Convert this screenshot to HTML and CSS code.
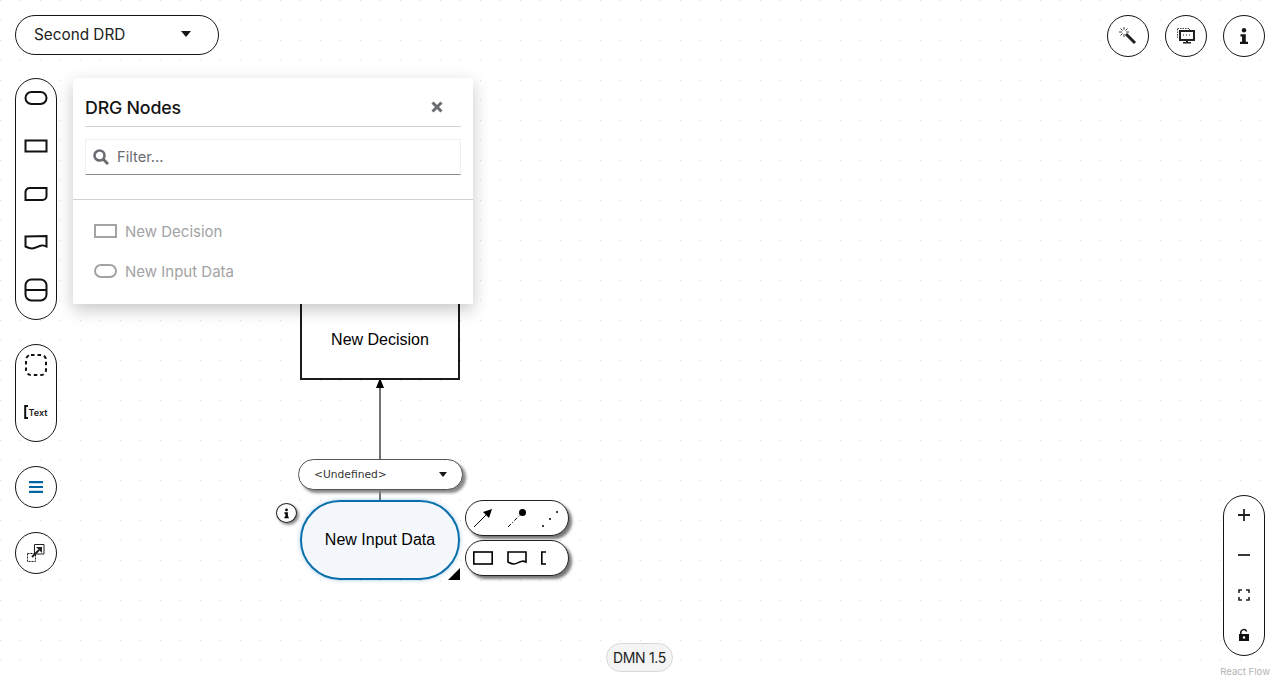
FILE: index.html
```html
<!DOCTYPE html>
<html lang="en">
<head>
    <meta charset="UTF-8">
    <title>DMN Editor</title>
    <link rel="stylesheet" href="styles.css">
</head>
<body>
<div class="canvas">
    <!-- edge between the two nodes -->
    <svg class="edge" width="1280" height="680">
        <path d="M380 500V386" stroke="#444" stroke-width="1.5" fill="none"/>
        <path d="M380 378l4 10h-8z" fill="#000"/>
    </svg>

    <div class="node decision-node">New Decision</div>

    <div class="type-select">
        <span>&lt;Undefined&gt;</span>
        <i class="caret caret-small"></i>
    </div>

    <div class="node input-node">New Input Data</div>
    <div class="resize-handle"></div>

    <div class="node-info">
        <svg width="12" height="14" viewBox="0 0 12 14"><circle cx="6" cy="2.2" r="1.8"/><path d="M3.2 5.4h4.600v5.800h1.200v2H3.200v-2h1.300V7.400H3.200z"/></svg>
    </div>

    <div class="node-tools">
        <div class="tool-row">
            <svg width="20" height="20" viewBox="0 0 20 20"><path d="M1 19L15 5" stroke="#000" fill="none"/><path d="M19 1l-3 9-6-6z"/></svg>
            <svg width="20" height="20" viewBox="0 0 20 20"><path d="M1 19l12-12" stroke="#000" stroke-dasharray="4 2 1 2" fill="none"/><circle cx="15.5" cy="4.5" r="3.5"/></svg>
            <svg width="20" height="20" viewBox="0 0 20 20"><circle cx="2" cy="18" r="1"/><circle cx="9" cy="11" r="1"/><circle cx="16" cy="4" r="1"/></svg>
        </div>
        <div class="tool-row">
            <svg width="20" height="14" viewBox="0 0 20 14"><rect x="0.800" y="1" width="18.400" height="12" stroke="#000" stroke-width="1.600" fill="none"/></svg>
            <svg width="20" height="14" viewBox="0 0 20 14"><path d="M1 1h18v10c-1.500-.6-3-1-4-.8C12 10.500 10 13 7 13 4.500 13 3 12 1 11z" stroke="#000" stroke-width="1.600" fill="none"/></svg>
            <svg width="10" height="14" viewBox="0 0 10 14"><path d="M5 1H0.800v12H5" stroke="#000" stroke-width="1.600" fill="none"/></svg>
        </div>
    </div>

    <div class="left-bar">
        <div class="drd-select">
            <span>Second DRD</span>
            <i class="caret"></i>
        </div>
        <div class="left-body">
            <div class="palette">
                <div class="pill pill-nodes">
                    <svg width="24" height="16" viewBox="0 0 24 16"><rect x="1.500" y="2" width="21" height="12" rx="6" class="shape"/></svg>
                    <svg width="24" height="16" viewBox="0 0 24 16"><rect x="1.500" y="2.500" width="21" height="11" class="shape"/></svg>
                    <svg width="24" height="16" viewBox="0 0 24 16"><path d="M5.500 2h17v8a4 4 0 0 1-4 4H1.500V6a4 4 0 0 1 4-4z" class="shape"/></svg>
                    <svg width="24" height="16" viewBox="0 0 24 16"><path d="M1.500 2.500l21-.5v10.500c-2-.8-3.500-1.500-5-1C14 12 12 14.500 8 14.500c-2.500 0-4.500-1-6.500-2z" class="shape"/></svg>
                    <svg width="24" height="24" viewBox="0 0 24 24"><rect x="1.500" y="1.500" width="21" height="21" rx="6" class="shape"/><path d="M1.500 12h21" class="shape"/></svg>
                </div>
                <div class="pill pill-extras">
                    <svg width="24" height="24" viewBox="0 0 24 24"><rect x="2" y="2" width="20" height="20" rx="5" class="shape" stroke-dasharray="3.500 3"/></svg>
                    <div class="text-tool"><svg width="5" height="14" viewBox="0 0 5 14"><path d="M4 1H1.200v12H4" class="shape"/></svg><span>Text</span></div>
                </div>
                <div class="pill pill-round pill-blue">
                    <svg width="14" height="12" viewBox="0 0 14 12"><path d="M0 0h14v2.200H0zM0 4.900h14v2.200H0zM0 9.800h14V12H0z"/></svg>
                </div>
                <div class="pill pill-round">
                    <svg width="18" height="18" viewBox="0 0 18 18"><rect x="0.500" y="9.500" width="8" height="8" stroke="#222" stroke-dasharray="2 1" fill="none"/><path d="M7.500 0.500h9.500v9.500H7.500z" stroke="#222" fill="#fff"/><path d="M5 13l7-7" stroke="#222" stroke-width="2"/><path d="M15 3v6l-6-6z" fill="#222"/></svg>
                </div>
            </div>

            <div class="drg-panel">
                <div class="panel-head">
                    <h2>DRG Nodes</h2>
                    <svg class="panel-close" width="12" height="12" viewBox="0 0 12 12"><path d="M1.500 1.500l9 9M10.500 1.500l-9 9" stroke="#6a6e73" stroke-width="3" fill="none"/></svg>
                </div>
                <div class="panel-filter">
                    <svg width="16" height="16" viewBox="0 0 16 16"><circle cx="6.500" cy="6.500" r="5" stroke="#6a6e73" stroke-width="2.600" fill="none"/><path d="M10.300 10.300l4.700 4.700" stroke="#6a6e73" stroke-width="3" fill="none"/></svg>
                    <span>Filter...</span>
                </div>
                <div class="panel-list">
                    <div class="panel-item">
                        <svg width="23" height="14" viewBox="0 0 23 14"><rect x="1" y="1" width="21" height="12" stroke="#a3a3a3" stroke-width="2" fill="none"/></svg>
                        <span>New Decision</span>
                    </div>
                    <div class="panel-item">
                        <svg width="23" height="14" viewBox="0 0 23 14"><rect x="1" y="1" width="21" height="12" rx="6" stroke="#a3a3a3" stroke-width="2" fill="none"/></svg>
                        <span>New Input Data</span>
                    </div>
                </div>
            </div>
        </div>
    </div>

    <div class="top-actions">
        <div class="pill pill-round">
            <svg width="18" height="18" viewBox="0 0 18 18"><path d="M7 7l9 9" stroke="#222" stroke-width="3"/><path d="M5 0v3M5 7v3M0 5h3M7 5h3M1.500 1.500l2 2M8.500 1.500l-2 2M1.500 8.500l2-2" stroke="#444" stroke-width="1" fill="none"/></svg>
        </div>
        <div class="pill pill-round">
            <svg width="18" height="16" viewBox="0 0 18 16"><rect x="0.500" y="0.500" width="12" height="9" stroke="#444" stroke-dasharray="1.500 1" fill="none"/><rect x="3" y="3" width="14" height="9" fill="#fff" stroke="#222" stroke-width="2"/><path d="M6 7h1M9 7h1M12 7h1" stroke="#222"/><path d="M9 12h2v2h3v1.500H6V14h3z" fill="#222"/></svg>
        </div>
        <div class="pill pill-round">
            <svg width="8" height="18" viewBox="0 0 9 18"><circle cx="4.500" cy="2.500" r="2.500" fill="#151515"/><path d="M0.500 7h6v8.500H9V18H0v-2.500h2.300v-6H0.500z" fill="#151515"/></svg>
        </div>
    </div>

    <div class="zoom-controls pill">
        <svg width="14" height="14" viewBox="0 0 14 14"><path d="M7 1v12M1 7h12" stroke="#222" stroke-width="1.800"/></svg>
        <svg width="14" height="14" viewBox="0 0 14 14"><path d="M1 7h12" stroke="#222" stroke-width="1.800"/></svg>
        <svg width="14" height="14" viewBox="0 0 14 14"><path d="M2 5V2h3M9 2h3v3M12 9v3H9M5 12H2V9" stroke="#222" stroke-width="1.600" fill="none"/></svg>
        <svg width="14" height="14" viewBox="0 0 14 14"><path d="M3.800 6V4.500a3 3 0 0 1 5.800-1" stroke="#111" stroke-width="1.500" fill="none"/><path d="M2 6h10v7H2z" fill="#111"/><circle cx="7" cy="9.500" r="1.200" fill="#fff"/></svg>
    </div>

    <div class="dmn-version">DMN 1.5</div>
    <div class="attribution">React Flow</div>
</div>
</body>
</html>
```

FILE: styles.css
```css
* {
    box-sizing: border-box;
}

body {
    margin: 0;
    font-family: "Inter", "Liberation Sans", sans-serif;
    color: #151515;
    background-color: #fff;
    overflow: hidden;
}

.canvas {
    position: relative;
    width: 1280px;
    height: 680px;
    overflow: hidden;
    background-color: #fff;
    background-image: radial-gradient(circle at 0.5px 0.5px, #dcdcdc 0.8px, transparent 1px);
    background-size: 20px 20px;
    background-position: 0 0;
}

.edge {
    position: absolute;
    top: 0;
    left: 0;
}

/* nodes */
.node {
    position: absolute;
    width: 160px;
    height: 80px;
    display: flex;
    align-items: center;
    justify-content: center;
    font-family: "Liberation Sans", Arial, sans-serif;
    font-size: 16px;
    color: #000;
}

.decision-node {
    left: 300px;
    top: 300px;
    background: #fff;
    border: 2px solid #1a1a1a;
}

.input-node {
    left: 300px;
    top: 500px;
    background: #f4f8fc;
    border: 2px solid #0a6fa8;
    border-radius: 40px;
    box-shadow: 0 0 4px rgba(0, 102, 204, 0.35);
}

.resize-handle {
    position: absolute;
    left: 448px;
    top: 568px;
    width: 12px;
    height: 12px;
    background: #000;
    clip-path: polygon(100% 0, 100% 100%, 0 100%);
}

.type-select {
    position: absolute;
    left: 298px;
    top: 459px;
    width: 165px;
    height: 31px;
    padding: 0 15px 0 15px;
    display: flex;
    align-items: center;
    justify-content: space-between;
    background: #fff;
    border: 1px solid #555;
    border-radius: 16px;
    box-shadow: 3px 3px 3px #888;
    font-family: "DejaVu Sans", sans-serif;
    font-size: 10.7px;
    color: #333;
}

.node-info {
    position: absolute;
    left: 276px;
    top: 503px;
    width: 21px;
    height: 20px;
    display: flex;
    align-items: center;
    justify-content: center;
    background: #fff;
    border: 1px solid #222;
    border-radius: 50%;
    box-shadow: 2px 2px 3px #888;
}

.node-info svg {
    width: 9px;
    height: 11px;
}

.node-tools {
    position: absolute;
    left: 465px;
    top: 500px;
    display: flex;
    flex-direction: column;
    gap: 4px;
}

.tool-row {
    width: 104px;
    height: 36px;
    padding-left: 7px;
    display: flex;
    align-items: center;
    gap: 14px;
    background: #fff;
    border: 1px solid #222;
    border-radius: 18px;
    box-shadow: 3px 3px 3px #777;
}

/* left side overlay */
.left-bar {
    position: absolute;
    left: 15px;
    top: 15px;
    display: flex;
    flex-direction: column;
    gap: 23px;
}

.drd-select {
    width: 204px;
    height: 40px;
    padding: 0 27px 2px 18px;
    display: flex;
    align-items: center;
    justify-content: space-between;
    background: #fff;
    border: 1px solid #151515;
    border-radius: 20px;
    font-size: 15.3px;
    color: #222;
}

.caret {
    width: 0;
    height: 0;
    border-left: 5.5px solid transparent;
    border-right: 5.5px solid transparent;
    border-top: 6px solid #151515;
}

.caret-small {
    border-left-width: 4.5px;
    border-right-width: 4.5px;
    border-top-width: 5px;
}

.left-body {
    display: flex;
    align-items: flex-start;
    gap: 16px;
}

.palette {
    display: flex;
    flex-direction: column;
    gap: 24px;
}

.pill {
    display: flex;
    flex-direction: column;
    align-items: center;
    background: #fff;
    border: 1px solid #151515;
    border-radius: 21px;
    width: 42px;
}

.pill-nodes {
    height: 242px;
    padding-top: 11px;
    gap: 32px;
}

.pill-nodes svg:last-child {
    margin-top: -4px;
}

.pill-extras {
    height: 98px;
    padding-top: 8px;
    gap: 28px;
}

.pill-round {
    height: 42px;
    justify-content: center;
}

.pill-blue svg {
    fill: #0066a1;
}

.shape {
    fill: none;
    stroke: #111;
    stroke-width: 2;
}

.text-tool {
    display: flex;
    align-items: center;
    margin-left: -1px;
    font-size: 9px;
    font-weight: 600;
    color: #222;
}

/* DRG nodes panel */
.drg-panel {
    width: 400px;
    height: 226px;
    background: #fff;
    box-shadow: 0 6px 16px rgba(0, 0, 0, 0.22);
}

.panel-head {
    height: 49px;
    margin: 0 12px;
    padding: 10px 18px 0 0;
    display: flex;
    align-items: center;
    justify-content: space-between;
    border-bottom: 1px solid #d2d2d2;
}

.panel-head h2 {
    margin: 0;
    font-size: 17.8px;
    font-weight: 500;
    letter-spacing: -0.2px;
}

.panel-filter {
    height: 36px;
    margin: 12px 12px 0;
    padding-left: 7px;
    display: flex;
    align-items: center;
    gap: 8px;
    border: 1px solid #f0f0f0;
    border-bottom: 1px solid #8a8d90;
    font-size: 14.7px;
    color: #6a6e73;
}

.panel-list {
    margin-top: 24px;
    padding: 21px 21px 0;
    border-top: 1px solid #d2d2d2;
    display: flex;
    flex-direction: column;
    gap: 20px;
}

.panel-item {
    height: 20px;
    display: flex;
    align-items: center;
    gap: 8px;
    font-size: 15px;
    color: #a3a3a3;
}

/* top right */
.top-actions {
    position: absolute;
    top: 15px;
    right: 15px;
    display: flex;
    gap: 16px;
}

/* bottom right */
.zoom-controls {
    position: absolute;
    left: 1223px;
    top: 495px;
    height: 161px;
    padding-top: 12px;
    gap: 26px;
}

.dmn-version {
    position: absolute;
    left: 606px;
    top: 643px;
    width: 67px;
    height: 29px;
    display: flex;
    align-items: center;
    justify-content: center;
    background: #f4f4f4;
    border: 1px solid #d8d8d8;
    border-radius: 15px;
    font-size: 14px;
    letter-spacing: -0.3px;
    color: #222;
}

.attribution {
    position: absolute;
    right: 10px;
    bottom: 3px;
    font-size: 9.6px;
    color: #b4b4b4;
}
```
